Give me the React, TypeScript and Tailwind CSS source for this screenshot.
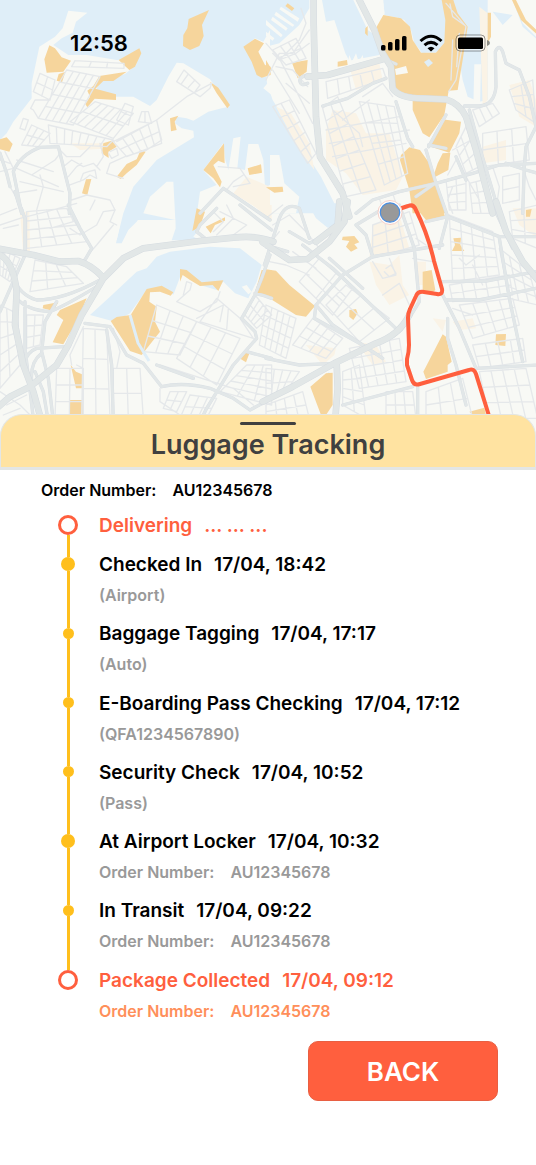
import React from "react";

type Point = [number, number];

type Tile = {
  x: number;
  y: number;
  water: string[];
  land: string[];
  built: string[];
  parks: string[];
  streets: string[];
  roads: string[];
  highways: string[];
};

/** Street grid that fills the four-cornered block a-b-c-d. */
function grid(a: Point, b: Point, c: Point, d: Point, cols: number, rows: number): string {
  const mix = (p: Point, q: Point, t: number) =>
    `${Math.round(p[0] + (q[0] - p[0]) * t)} ${Math.round(p[1] + (q[1] - p[1]) * t)}`;
  let path = "";
  for (let i = 0; i <= cols; i++) path += `M${mix(a, b, i / cols)}L${mix(d, c, i / cols)}`;
  for (let j = 0; j <= rows; j++) path += `M${mix(a, d, j / rows)}L${mix(b, c, j / rows)}`;
  return path;
}

const tiles: Tile[] = [
  {
    x: 0,
    y: 0,
    water: ["M0 0H800V660H0Z"],
    land: [
      "M0 420L20 400L40 365L95 295L95 250L118 140L165 110L188 85L205 32L262 38L228 65L218 98L185 115L160 135L205 165L260 165L350 180L380 180L420 150L408 195L375 222L300 245L285 275L350 290L400 290L450 318L470 300L505 230L530 188L550 190L630 238L688 320L665 325L625 335L580 362L560 355L530 350L525 370L545 385L580 392L582 412L470 480L400 560L370 640L350 720L0 720Z",
      "M430 640L450 590L500 545L520 545L526 660Z",
      "M588 660L600 575L650 555L610 510L670 430L676 480L685 510L700 415L722 410L712 505L735 510L745 432L775 432L790 480L795 560L815 560V660Z",
      "M735 140L765 115L790 125L810 90V230H780Z",
      "M815 235L790 265L815 285Z",
    ],
    built: ["M210 430L300 430L345 420L345 445L240 450Z", "M740 530L810 560V625L780 630L700 580Z"],
    parks: [
      "M148 136L165 145L185 172L213 182L190 215L140 218L133 178Z",
      "M176 222L196 216L186 247L170 242Z",
      "M356 180L418 145L424 160L405 200L388 210L375 198Z",
      "M380 215L340 243L310 243L286 266L348 283V300L284 296L262 322L256 312L270 290L262 272L280 258L298 228Z",
      "M566 57L627 30L606 75L611 108L598 138L570 150L549 138L550 105L562 85Z",
      "M630 245L655 263L690 315L682 325L650 280Z",
      "M510 355L535 347L524 365L530 390L513 394Z",
      "M310 430L335 422L350 440L325 455L326 474L305 460Z",
      "M350 530L380 492L410 478L422 450L437 455L410 495L380 520L362 537Z",
      "M258 538L274 537L262 585L246 580Z",
      "M672 430L674 490L655 482L640 495L665 545L660 562L640 535L610 510Z",
      "M743 505L783 493L786 518L748 525Z",
      "M730 140L765 116L792 130L775 155L795 195L812 200V225L785 233L770 225L755 185Z",
      "M0 418L20 412L38 432L28 455L0 448Z",
    ],
    streets: [
      grid([120, 220], [165, 240], [150, 300], [100, 275], 2, 2),
      grid([225, 182], [372, 190], [372, 205], [215, 200], 3, 1),
      grid([200, 210], [300, 230], [220, 375], [115, 355], 5, 4),
      grid([285, 305], [400, 340], [340, 415], [210, 365], 6, 2),
      grid([145, 375], [340, 420], [320, 440], [150, 430], 8, 1),
      grid([375, 310], [400, 320], [385, 375], [350, 360], 1, 2),
      grid([425, 335], [445, 335], [455, 370], [415, 365], 2, 1),
      grid([340, 425], [470, 360], [485, 430], [380, 470], 5, 2),
      grid([70, 355], [85, 360], [75, 390], [60, 385], 1, 1),
      grid([95, 375], [150, 400], [115, 440], [65, 435], 3, 2),
      "M115 355L100 330L92 325L105 300L150 300",
      "M350 425L470 360L560 290L635 250L630 265L600 290L530 245L552 210L600 255L585 275M545 250L565 222M565 262L585 240",
      "M470 362L485 420L440 450L375 470L330 490L320 520L370 535",
      "M50 480L160 515M50 505L175 560M60 545L190 575M30 560L70 630M95 525L165 480L180 460M110 630L130 560L120 525M0 480L30 490M0 515L40 505L15 455M45 580L110 570",
      "M180 450L200 470L240 470L270 440M190 500L215 480L250 500L280 490L300 510M205 530L230 500L245 490M210 555L250 540L270 525L290 535L285 510L265 515L250 520L240 545M215 600L260 585L330 600L345 630M270 630L285 600M330 455L350 445L355 465L335 475L326 460M300 430L310 470L290 500",
      "M655 500L720 505L750 550L700 560M680 570L700 545L730 525",
    ],
    roads: [
      "M45 575L65 640",
      "M600 640L670 565L810 660",
      "M0 460L20 520L30 560",
      "M65 640L40 515Q60 465 120 442L175 440L195 520L210 580L208 640",
    ],
    highways: [],
  },
  {
    x: 266,
    y: 0,
    water: [
      "M0 0H130V25L100 75L40 130L0 140Z",
      "M0 240L20 300L100 430L165 530L220 640H0Z",
      "M168 0H262L305 90L350 120L340 165L250 182L238 160L205 60L180 65Z",
      "M352 0H740L770 80L815 120V0H560L530 0L538 130L510 155L470 160L445 130L435 90L415 60L355 40Z",
      "M352 0H665V300L640 305L605 290L590 240L560 60L538 130L510 158H465L430 60L355 45Z",
      "M680 35L740 45L710 75Z",
      "M740 0H815V115L770 70Z",
    ],
    land: [
      "M0 60L50 105L45 112L0 75ZM20 50L65 85L60 92L15 60ZM30 35L85 75L80 80L25 45ZM45 20L100 55L95 65L40 28ZM0 95L25 115L20 122L0 108Z",
      "M12 465L40 465L55 550L100 590L90 640H0V560L12 555Z",
      "M625 193L645 193L642 320H622Z",
      "M310 0H350L356 40L340 60Z",
      "M245 190L250 165L258 185L270 160L278 185L290 165L295 190Z",
    ],
    built: [
      "M30 320L75 340L130 430L145 510L100 450Z",
      "M200 330L270 340L300 400L370 400L410 530L390 570L290 585L240 520L180 480L180 390Z",
      "M250 200L340 190L350 240L270 270Z",
      "M730 255L790 240L810 300L810 380L760 350Z",
      "M650 440L720 420L720 480L650 490Z",
      "M640 20L665 40V300L650 320Z",
    ],
    parks: [
      "M332 80L352 45L405 55L432 80L440 120L465 158L510 158L535 128L538 60L527 0H562L575 40L605 80L590 180L575 270L548 272L535 345L490 412L470 400L440 330V300L390 270L370 185L345 130Z",
      "M528 358L585 365L580 400L550 458L488 438Z",
      "M530 460L553 458L547 510L500 535L515 490Z",
      "M405 465L430 442L462 450L490 490L505 540L540 640H440L430 570L402 480Z",
      "M78 188L125 180L122 215L95 235Z",
      "M215 185L243 180L245 195L215 200Z",
      "M0 180L18 210L0 227Z",
      "M65 10L85 25L78 33L58 18Z",
      "M0 562L50 560L52 575L25 578Z",
      "M738 0H750L780 60L812 90V102L765 60Z",
      "M665 38H675V110L665 130Z",
      "M298 85L305 78L305 108L297 100Z",
    ],
    streets: [
      grid([170, 325], [215, 290], [330, 570], [240, 590], 2, 7),
      grid([280, 305], [385, 320], [425, 520], [355, 555], 4, 4),
      grid([180, 245], [350, 205], [360, 235], [185, 295], 5, 1),
      grid([20, 320], [70, 300], [150, 460], [125, 490], 2, 5),
      grid([20, 150], [90, 115], [120, 175], [60, 195], 3, 2),
      grid([570, 440], [600, 380], [640, 500], [600, 520], 2, 3),
      grid([620, 330], [680, 310], [700, 340], [640, 380], 3, 1),
      grid([730, 270], [800, 240], [810, 370], [750, 330], 2, 3),
      grid([650, 400], [780, 380], [790, 480], [650, 500], 3, 2),
      grid([610, 550], [650, 540], [670, 640], [620, 640], 2, 3),
      grid([710, 530], [760, 520], [760, 600], [710, 610], 1, 2),
      grid([540, 540], [600, 525], [600, 630], [550, 630], 2, 4),
      "M105 25L120 70L100 120L40 180L20 160M130 90L80 160L40 160L0 240M0 130L40 175L110 310L140 370M30 200L80 210L125 260M40 180L90 160L130 130M20 210L100 340M60 250L130 310",
      "M540 10L600 80L570 240L548 275M552 12L560 50L595 75M560 120L555 240M580 100L572 200",
      "M290 290L350 250L380 290M200 330L280 400L290 440M230 360L310 300M180 390L400 350M190 430L430 390M200 470L420 430",
      "M600 530L640 600M770 500L790 560L810 600M680 500L700 560L690 630M570 480L545 525M615 420L560 450",
      "M380 580L400 640M340 595L355 640M560 560L545 600L560 640M450 590L500 550",
    ],
    roads: [
      "M360 235L320 250L245 295L170 318",
      "M390 305L425 415L440 440M480 450L495 500L510 550L545 650M488 440L540 345M540 445L488 435",
      "M595 318H640Q685 315 690 260L688 155Q700 130 710 155L720 190L760 210L790 290L810 380L780 440L775 500L770 640",
      "M270 640L320 600L400 575L510 550L620 520L700 495L815 490",
      "M720 490L780 510L815 520M610 330L640 440L700 640M570 470L600 540",
      "M450 590L510 548M345 150Q350 180 390 192",
      "M125 225Q98 230 102 245T125 250",
    ],
    highways: [
      "M143 -10V70L147 230L150 350L162 470L230 580L250 650",
      "M275 -10L325 90L350 160L375 200L380 265Q400 295 470 295L540 298Q580 310 600 350L630 450L680 640",
      "M125 230L185 225L350 178",
    ],
  },
  {
    x: 0,
    y: 205,
    water: [
      "M370 0H445L410 50L385 75L365 115H348L360 60Z",
      "M525 -10H590L600 70L580 95L600 105L515 106L527 70Z",
      "M470 155L510 140L630 125L720 130L785 180L770 230L745 280L705 265L670 230L650 255L600 240L548 195L520 270L480 245L440 255L390 325L345 350L270 330L330 275L410 200L440 190Z",
    ],
    land: [
      "M535 275L540 215L600 242L650 258L670 230L700 290L560 380L470 390L440 300L450 260L500 260Z",
      "M725 245L740 240L755 260L745 268Z",
    ],
    built: ["M60 20L88 20L90 140L70 150Z", "M760 0H815V50Z"],
    parks: [
      "M590 10L615 20L600 65L577 78Z",
      "M617 65L675 37L675 47L645 60L632 85Z",
      "M540 192L560 195L605 232L670 226L655 258L638 240L600 243L570 225L548 210L540 230Z",
      "M485 242L520 262L512 272L480 260L450 262L448 290L470 305L465 350L480 380L425 450L390 438L332 348L350 336L392 330L440 252Z",
      "M130 300L175 292L160 318L128 310Z",
      "M180 315L260 280L230 350L190 418L158 412L190 345L170 330Z",
      "M212 480L228 500L246 508V550H228Z",
      "M210 585H250V630H210Z",
      "M740 440H750L738 472L722 462Z",
      "M785 195H815V275L765 262Z",
    ],
    streets: [
      grid([80, 20], [200, 10], [260, 110], [80, 130], 4, 4),
      grid([105, 165], [200, 185], [250, 235], [90, 260], 3, 3),
      grid([470, 300], [590, 350], [540, 450], [430, 440], 3, 3),
      grid([590, 350], [720, 400], [650, 540], [530, 460], 3, 3),
      grid([650, 280], [720, 340], [760, 400], [600, 350], 2, 1),
      grid([735, 330], [765, 270], [815, 330], [770, 370], 2, 4),
      grid([740, 480], [815, 480], [815, 600], [660, 560], 3, 5),
      grid([0, 130], [60, 160], [30, 230], [0, 210], 4, 3),
      grid([0, 300], [40, 320], [60, 480], [0, 550], 2, 5),
      grid([80, 330], [130, 330], [120, 420], [80, 430], 2, 3),
      grid([250, 370], [320, 375], [330, 640], [245, 640], 2, 3),
      grid([170, 490], [250, 490], [250, 640], [165, 640], 2, 3),
      grid([340, 490], [420, 490], [430, 640], [340, 640], 2, 2),
      grid([510, 560], [560, 560], [530, 620], [490, 610], 2, 2),
      grid([570, 570], [650, 580], [620, 640], [540, 640], 3, 2),
      "M0 60L60 40L140 20L230 -5M0 30L50 10M10 70L55 60M150 70L220 50L205 10M210 70L240 90L290 60L310 20L345 15L330 50L350 60M250 165L290 120L340 60",
      "M550 270L560 230L575 235L570 255L530 290L600 320L650 290L660 260M590 340L670 300L660 350M480 480L700 550L760 600",
      "M215 480L210 450L250 365M230 480L250 490M340 370L360 440L350 490M480 550V590L540 630M660 20L740 60L700 90M680 0L700 40L650 90M640 80L670 50L640 20",
      "M0 560L60 600L100 640M20 600L80 570M10 630L60 610",
    ],
    roads: [
      "M55 -10L75 40V150L0 320",
      "M205 0L240 70L275 130L255 165",
      "M810 150L785 220L765 270L725 340L765 380L770 400L700 480L620 610L600 650",
      "M650 10L600 60L590 80L615 100M720 0L770 40L815 75",
      "M485 545Q550 530 630 550L700 580L750 615L815 580M320 375L335 480L340 650",
      "M765 265Q790 270 815 280M740 440L815 460M470 480L580 520",
      "M255 355L330 365L380 450L430 475L485 545",
      "M40 220Q60 270 110 285Q190 285 300 225M50 280Q80 315 150 320Q200 300 290 245M170 290L135 350L125 440L145 520L160 650M75 290V430L100 640M190 425L110 430Q80 440 70 480M95 530Q90 470 125 445",
      "M45 290L55 400L80 500M105 500L130 560L145 650",
    ],
    highways: [
      "M-10 130L100 150L180 170L235 168Q275 180 310 218",
      "M-10 610L30 575L90 545L170 480L205 420L245 330L310 220L370 160L430 130L600 108L700 98Q770 90 820 110",
      "M0 150Q40 170 50 260L45 360L70 480L100 560L125 650",
    ],
  },
  {
    x: 266,
    y: 205,
    water: ["M125 -5H220L225 20L205 65L185 68L150 40Z", "M165 520L190 500V535L180 545Z"],
    land: ["M430 290L530 270L550 350L470 500L440 530L425 440Z"],
    built: [
      "M320 60L400 30L430 130L310 160Z",
      "M310 170L370 180L400 150L410 240L430 270L370 300L330 240Z",
      "M270 410L330 420L360 470L320 480Z",
      "M450 170H480V240H450Z",
      "M500 340L540 345L530 380Z",
      "M120 420L210 430L205 450L170 480Z",
      "M740 10H815V100L760 60Z",
      "M560 350L620 340L630 370L580 375Z",
    ],
    parks: [
      "M-5 192L30 197L70 240L147 303L120 335L90 330L-5 270Z",
      "M230 95L265 93L280 112L265 118L275 130L255 140L240 125L250 108L228 105Z",
      "M440 -5H525L537 35L485 52Z",
      "M562 100L585 98L583 120L595 138H558L567 120Z",
      "M780 15L797 12L792 35L780 35Z",
      "M470 200L497 195L508 255L500 262L470 255Z",
      "M250 315L270 312L275 325L262 345L250 335Z",
      "M530 388L540 395L557 470L545 480V500L480 522L472 500Z",
      "M690 388L720 387L718 423L688 420Z",
      "M133 545L180 505L200 503V600L180 630H165Z",
      "M610 620L655 608L660 630H620Z",
    ],
    streets: [
      grid([0, 300], [90, 340], [60, 460], [-20, 420], 5, 4),
      grid([140, 340], [230, 400], [180, 460], [80, 420], 4, 3),
      grid([160, 160], [260, 250], [200, 330], [100, 230], 2, 3),
      grid([240, 240], [370, 340], [280, 410], [180, 300], 3, 2),
      grid([250, 430], [400, 400], [420, 530], [280, 550], 5, 4),
      grid([230, 500], [280, 480], [300, 640], [230, 600], 2, 4),
      grid([360, 560], [440, 560], [450, 640], [360, 640], 3, 2),
      grid([480, 560], [590, 520], [620, 640], [480, 640], 3, 2),
      grid([550, 30], [680, 80], [700, 210], [560, 230], 4, 5),
      grid([550, 240], [730, 210], [740, 270], [560, 290], 5, 2),
      grid([580, 300], [740, 280], [760, 360], [620, 400], 4, 3),
      grid([620, 420], [770, 400], [780, 470], [640, 490], 4, 2),
      grid([640, 500], [780, 490], [815, 640], [670, 640], 4, 3),
      grid([700, 130], [790, 200], [815, 300], [730, 280], 3, 4),
      grid([730, 20], [815, 0], [815, 130], [740, 100], 2, 3),
      grid([320, 60], [430, 20], [460, 120], [320, 160], 3, 3),
      grid([0, 490], [100, 500], [60, 560], [0, 580], 4, 2),
      grid([0, 600], [110, 560], [130, 640], [0, 640], 4, 2),
      "M350 270L400 235L430 300M320 170L350 220L390 210L370 160M20 60L70 30L120 80L160 130M0 40L50 0M10 170L60 180L130 210M0 130L40 80M80 140L150 190M360 190L375 180L390 205L370 215L355 200",
      "M440 160L500 170M450 100L480 120M580 160L600 180L640 150M620 180L650 240M560 310L620 330",
    ],
    roads: [
      "M-5 180L40 40Q60 -10 100 10L130 100",
      "M70 80L130 115L160 100M0 120L65 140",
      "M110 120L200 190L400 380M190 160L290 250M320 155L230 210L150 300L145 340L290 420",
      "M320 155L530 120M320 155L300 90L270 60L370 0",
      "M400 0L445 130L455 240L460 290Q430 340 405 375L380 395",
      "M480 50L545 35L700 95H815M545 35L520 130",
      "M530 230L660 228L810 200M540 285H640L810 250",
      "M530 270L580 370L630 490L815 480M545 340V400L570 480L600 600M700 100L730 280L770 470M680 0L740 130",
      "M230 600L440 545M455 545V640M0 460L100 480L205 475",
      "M150 300L200 360L290 420L350 460",
    ],
    highways: [
      "M-10 112L70 165L125 162L190 110L235 50L245 -10",
      "M150 110L215 60L220 -10",
      "M690 -10L720 80L770 170L820 230",
      "M-10 590L80 545L205 475L330 415Q400 390 430 330",
      "M212 475L215 550L208 640",
    ],
  },
];

const place = (tile: Tile) => `translate(${tile.x} ${tile.y}) scale(0.33333)`;

function Layer({ pick, fill }: { pick: "water" | "land" | "built" | "parks"; fill: string }) {
  return (
    <g fill={fill}>
      {tiles.map((tile, i) => (
        <path key={i} transform={place(tile)} d={tile[pick].join("")} />
      ))}
    </g>
  );
}

function Lines({ pick, stroke, width }: { pick: "streets" | "roads" | "highways"; stroke: string; width: number }) {
  return (
    <g fill="none" stroke={stroke} strokeWidth={width} strokeLinejoin="round" strokeLinecap="round">
      {tiles.map((tile, i) => (
        <path key={i} transform={place(tile)} d={tile[pick].join("")} />
      ))}
    </g>
  );
}

function CityMap() {
  return (
    <svg
      className="absolute inset-0 h-full w-full"
      viewBox="0 0 536 440"
      preserveAspectRatio="xMidYMin slice"
      role="img"
      aria-label="Route map"
    >
      <rect width="536" height="440" fill="#f8f9f5" />
      <Layer pick="water" fill="#dfeef8" />
      <Layer pick="land" fill="#f8f9f5" />
      <Layer pick="built" fill="#faf3e6" />
      <Layer pick="parks" fill="#f6d59c" />
      <Lines pick="streets" stroke="#e5e8ea" width={4} />
      <Lines pick="roads" stroke="#d9dfe4" width={10} />
      <Lines pick="roads" stroke="#e2e7e8" width={8} />
      <Lines pick="highways" stroke="#d6dce1" width={20} />
      <Lines pick="highways" stroke="#e2e7e7" width={17} />
      <path d="M130 315L138 343L149 361" fill="none" stroke="#dfeef8" strokeWidth="3" />
      <path d="M424 62l5-3 4 4-5 4z" fill="#dfeef8" />
      <path d="M395 69l11-3 2 7-12 2z" fill="#f8f9f5" />
      <path
        d="M390 212L408 206Q413 204 415 208Q428 234 434 261L442 289Q443 295 437 294L424 292Q418 291 416 296L410 309Q408 313 408 318L409 345Q409 352 407 359L407 365L412 380Q414 386 420 384L469 370Q474 368 476 374L490 419"
        fill="none"
        stroke="#ff5f3e"
        strokeWidth="4"
        strokeLinejoin="round"
      />
      <circle cx="390" cy="212.500" r="12" fill="#fff" stroke="#f7cfc6" strokeWidth="1" />
      <circle cx="390" cy="212.500" r="9.700" fill="#999" stroke="#4a8ee0" strokeWidth="1.200" />
    </svg>
  );
}

function StatusBar() {
  return (
    <div className="relative flex items-center justify-between pt-[29px] pr-[45px] pl-[70px] text-black">
      <span className="text-[22px] leading-7 font-semibold">12:58</span>
      <div className="flex items-center">
        <svg className="h-4 w-7" viewBox="0 0 28 16" aria-label="Signal">
          <rect x="1" y="10" width="4.500" height="5.500" rx="1.500" />
          <rect x="8" y="7" width="4.500" height="8.500" rx="1.500" />
          <rect x="15" y="4" width="4.500" height="11.500" rx="1.500" />
          <rect x="22" y="1" width="4.500" height="14.500" rx="1.500" />
        </svg>
        <svg className="ml-[11px] h-[18px] w-6" viewBox="0 0 24 18" aria-label="Wi-Fi">
          <g fill="none" stroke="#000" strokeWidth="3">
            <path d="M1.500 7Q12-2.500 22.500 7" />
            <path d="M5.500 11.200Q12 5.500 18.500 11.200" />
          </g>
          <path d="M8.500 14.200Q12 11.200 15.500 14.200L12 17.600Z" />
        </svg>
        <svg className="ml-3 h-[18px] w-9" viewBox="0 0 36 18" aria-label="Battery">
          <rect x="1" y="1" width="29" height="16" rx="4" fill="#fff" fillOpacity="0.3" stroke="#000" strokeOpacity="0.4" />
          <rect x="3" y="3.500" width="25" height="11.500" rx="1.500" />
          <path d="M32 6Q35 7 35 9T32 12Z" fill="#8d8d86" />
        </svg>
      </div>
    </div>
  );
}

type Tone = "normal" | "active";
type Marker = "ring" | "large" | "small";
type Step = { title: string; time: string; note?: string[]; marker: Marker; tone: Tone };

const steps: Step[] = [
  { title: "Checked In", time: "17/04, 18:42", note: ["(Airport)"], marker: "large", tone: "normal" },
  { title: "Baggage Tagging", time: "17/04, 17:17", note: ["(Auto)"], marker: "small", tone: "normal" },
  { title: "E-Boarding Pass Checking", time: "17/04, 17:12", note: ["(QFA1234567890)"], marker: "small", tone: "normal" },
  { title: "Security Check", time: "17/04, 10:52", note: ["(Pass)"], marker: "small", tone: "normal" },
  { title: "At Airport Locker", time: "17/04, 10:32", note: ["Order Number:", "AU12345678"], marker: "large", tone: "normal" },
  { title: "In Transit", time: "17/04, 09:22", note: ["Order Number:", "AU12345678"], marker: "small", tone: "normal" },
  { title: "Package Collected", time: "17/04, 09:12", note: ["Order Number:", "AU12345678"], marker: "ring", tone: "active" },
];

const markerClass: Record<Marker, string> = {
  ring: "size-5 rounded-full border-3 border-[#ff5f3e] bg-white",
  large: "size-[14px] rounded-full bg-[#ffbf1c]",
  small: "size-[11px] rounded-full bg-[#ffbf1c]",
};

function Row({ step, first, last }: { step: Step; first?: boolean; last?: boolean }) {
  const active = step.tone === "active";
  return (
    <div className="flex h-full gap-[21px]">
      <div className="flex w-5 shrink-0 flex-col items-center">
        <div className="flex h-7 flex-col items-center">
          <span className={first ? "w-[3px] flex-1" : "w-[3px] flex-1 bg-[#ffbf1c]"} />
          <span className={markerClass[step.marker]} />
          <span className={last ? "w-[3px] flex-1" : "w-[3px] flex-1 bg-[#ffbf1c]"} />
        </div>
        <span className={last ? "w-[3px] flex-1" : "w-[3px] flex-1 bg-[#ffbf1c]"} />
      </div>
      <div>
        <p
          className={
            active
              ? "flex gap-3 text-[19px] leading-[30px] font-semibold text-[#ff5f3e]"
              : "flex gap-3 text-[19px] leading-[30px] font-semibold text-black"
          }
        >
          <span>{step.title}</span>
          <span>{step.time}</span>
        </p>
        {step.note && (
          <p
            className={
              active
                ? "mt-[5px] flex gap-4 text-base leading-5 font-semibold text-[#ff8f5a]"
                : "mt-[5px] flex gap-4 text-base leading-5 font-semibold text-[#999999]"
            }
          >
            {step.note.map((part) => (
              <span key={part}>{part}</span>
            ))}
          </p>
        )}
      </div>
    </div>
  );
}

export default function App() {
  return (
    <main className="min-h-screen bg-white pb-16 font-['Inter',sans-serif]">
      <div className="relative h-[440px] overflow-hidden">
        <CityMap />
        <StatusBar />
      </div>

      <header className="relative -mt-[26px] flex flex-col items-center rounded-t-[22px] border border-b-3 border-[#e3e6e5] bg-[#ffe3a1] pt-[7px] pb-1">
        <span className="h-[3px] w-14 rounded-full bg-[#404040]" />
        <h1 className="mt-[2px] text-[27px] leading-9 font-semibold text-[#404040]">Luggage Tracking</h1>
      </header>

      <p className="mt-2 flex gap-4 pl-[41px] text-base leading-6 font-semibold text-black">
        <span>Order Number:</span>
        <span>AU12345678</span>
      </p>

      <section aria-label="Tracking history" className="mt-[9px] pr-6 pl-[58px]">
        <div className="h-[39px]">
          <Row step={{ title: "Delivering", time: "... ... ...", marker: "ring", tone: "active" }} first />
        </div>
        <ol className="grid min-h-[485px] auto-rows-fr">
          {steps.map((step, i) => (
            <li key={step.title}>
              <Row step={step} last={i === steps.length - 1} />
            </li>
          ))}
        </ol>
      </section>

      <div className="mt-[6px] flex justify-end pr-[38px]">
        <button
          type="button"
          className="h-[60px] w-[190px] rounded-[10px] border border-[#e85f42] bg-[#ff5f3e] text-[26px] font-semibold text-white"
        >
          BACK
        </button>
      </div>
    </main>
  );
}
